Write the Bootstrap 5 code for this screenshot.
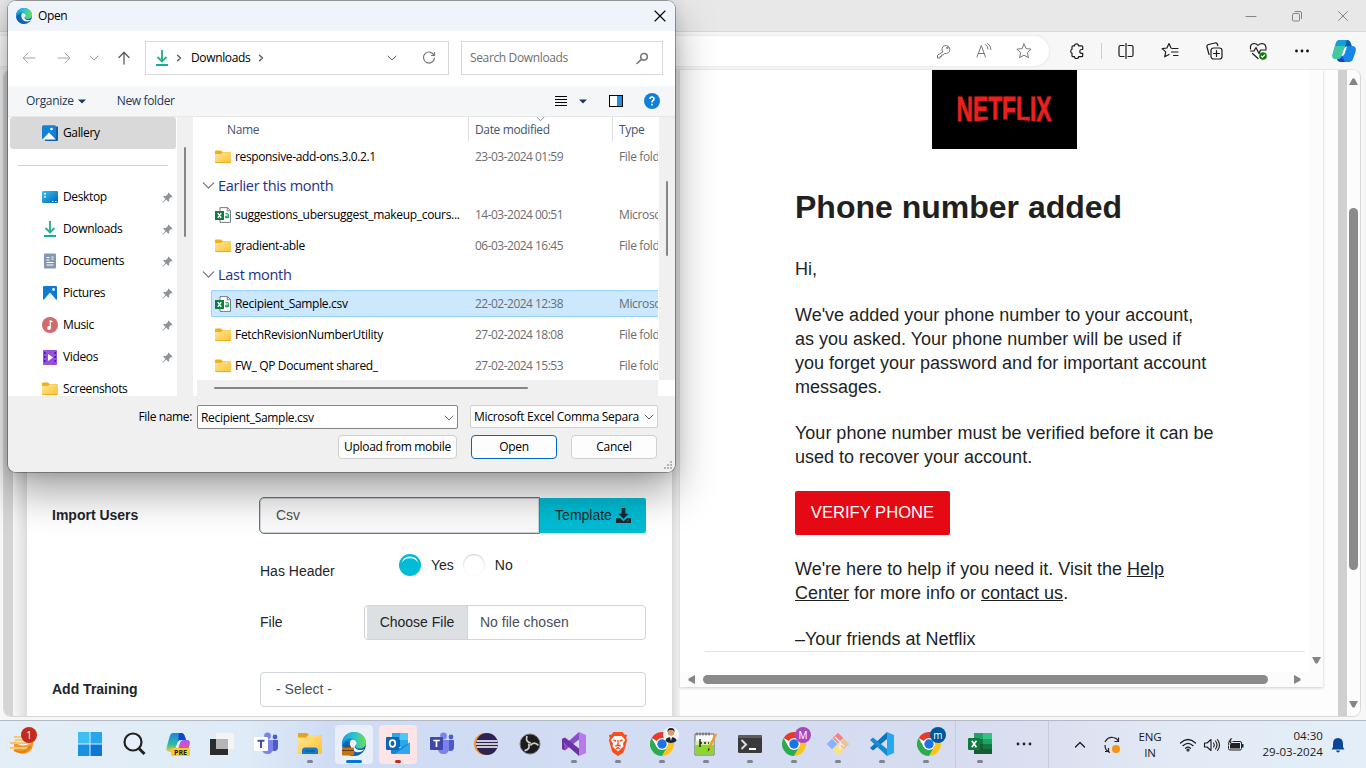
<!DOCTYPE html>
<html lang="en">
<head>
<meta charset="utf-8">
<title>Open</title>
<link href="https://cdn.jsdelivr.net/npm/bootstrap@5.3.0/dist/css/bootstrap.min.css" rel="stylesheet">
<style>
html,body{width:1366px;height:768px;overflow:hidden}
body{background:#f7f7f7;color:#212529;font:14px/20px "Liberation Sans",Arial,sans-serif;position:relative}
svg{display:block;flex:none}
.ln{fill:none;stroke:currentColor;stroke-linecap:round;stroke-linejoin:round}
/* browser */
.b-title{height:32px;background:#e8e8e8;border-bottom:1px solid #d9d9d9;color:#858585;padding-right:17px}
.b-tools{height:37px;padding-right:10px;color:#1b1b1b}
.omni{width:1049px;height:30px;border-radius:0 15px 15px 0;background:#fff;color:#777;box-shadow:0 0 3px #ddd;padding-right:17px}
.viewport{height:648px;margin:0 5px 0 3px;border:1px solid #d9d9d9;border-top-color:#e6e6e6;border-radius:8px;background:#fff;overflow:hidden}
.strip-a{width:9px;background:#d4d4d4}
.strip-b{width:14px;background:linear-gradient(90deg,#f7f7f7,#ddd)}
.formcard{width:645px;padding:0 26px 9px 25px}
.strip-c{width:8px;background:linear-gradient(90deg,#dcdcdc,#f2f2f2)}
.lab{width:208px;padding-bottom:2px}
.ctl{border:1px solid #ced4da;border-radius:4px;height:35px;color:#495057;background:#fff}
.ctl-ok{border:1px solid #2e9e55;border-radius:5px 0 0 5px;height:37px;width:281px;margin-left:-1px;background:#fafafa;box-shadow:inset 0 0 0 1px #ced4da}
.btn-tpl{background:#00bcd4;border:0;border-radius:0 2px 2px 0;height:35px;width:106px;font-size:14px;color:#212529;padding:0}
.rad{width:22px;height:22px;border-radius:50%;background:#fff;box-shadow:inset 0 1px 2px #ccc}
.rad-on{background:#00bcd4;box-shadow:none}
.pick{background:#dde0e3;width:101px;margin-left:2px;border-right:1px solid #ced4da;color:#212529}
.right{width:658px;background:#fdfdfd}
.mailframe{width:643px;height:617px;background:#fff;box-shadow:0 1px 3px #ccc}
.mail{width:600px;margin-left:25px;height:582px;border-bottom:1px solid #e5e5e5;font-size:18px;line-height:24px;color:#221f1f;padding:0 90px;overflow:hidden}
.mail p{margin:0 0 22px}
.mail h1{font-size:32px;line-height:38px;font-weight:700;margin:39px 0 31px}
.mail a{color:inherit}
.nf{width:145px;height:79px;background:#000}
.btn-red{background:#e50914;color:#fff;border-radius:2px;font-size:16.6px;width:155px;height:44px;border:0;padding:0}
.vs{width:14px;background:#fcfcfc}
.thumbc{background:#8a8a8a;border-radius:5px}
/* dialog */
.dlg{position:absolute;left:8px;top:1px;width:667px;height:471px;border-radius:8px;overflow:hidden;background:#f0f0f0;color:#000;font:12px/16px "Open Sans","Noto Sans",sans-serif;letter-spacing:-.36px;z-index:5}
.dlgshadow{position:absolute;left:8px;top:1px;width:667px;height:471px;border-radius:8px;box-shadow:0 0 0 1px rgba(0,0,0,.3),0 20px 42px rgba(0,0,0,.36),0 2px 14px rgba(0,0,0,.13);z-index:4}
.d-title{height:30px;background:#eff3fa;padding:0 9px 0 8px}
.d-nav{height:55px;background:#fff;color:#5c5c5c;padding:0 12px 1px 14px}
.abox{border:1px solid #d9d9d9;height:34px;background:#fff}
.d-cmd{height:31px;background:#f5f6f7;border-bottom:1px solid #e6e8ea;color:#1e395b;padding:0 15px 0 18px}
.d-body{height:279px}
.side{width:169px;background:#fff;overflow:hidden}
.sitem{height:32px;padding:0 4px 0 34px;gap:5px;flex:none}
.gal{background:#d9d9d9;border-radius:3px;margin:0 1px 0 2px;padding-left:32px}
.sep{height:1px;background:#d2d2d2;margin:16px 9px 15px 10px;flex:none}
.sb{width:16px;background:#f0f0f0}
.tl{background:#868686;border-radius:1px}
.list{width:461px;height:263px;background:#fff;overflow:hidden;margin-left:4px}
.lhead{height:25px;color:#44546f;flex:none}
.lhead>div{border-right:1px solid #e0e0e0;white-space:nowrap}
.lrow{height:31px;padding:2px 0 2px 14px;flex:none;white-space:nowrap;color:#6d6d6d}
.lrow>div{height:27px;border:1px solid transparent;border-right:0;padding-left:3px;width:447px;overflow:hidden}
.lrow.sel>div{background:#cce8ff;border-color:#99d1ff;border-radius:2px 0 0 2px}
.lname{width:260px;color:#000;gap:4px}
.ldate{width:144px;letter-spacing:-.52px}
.lgrp{height:27px;padding-left:5px;color:#1e3287;font-size:14.5px;flex:none;gap:3px;letter-spacing:-.3px}
.fbtn{height:24px;border:1px solid #d0d0d0;border-radius:4px;background:#fdfdfd;color:#000;font-size:12px;line-height:16px;padding:0;letter-spacing:-.3px;text-align:center}
.fbtn-p{border-color:#0067c0;outline:0}
/* taskbar */
.task{height:48px;background:linear-gradient(90deg,#e3eef7 0,#dfebf6 18%,#cfdcf4 24%,#d3dcf3 50%,#d7dcf0 70%,#dde0f0 78%,#e2eaf5 86%,#e3eef8 100%);border-top:1px solid #b3b9c4;color:#1a1a1a;font-family:"Open Sans","Noto Sans",sans-serif;font-size:11px;line-height:16px}
.tk{width:44px;height:47px;position:relative;padding-bottom:2px}
.tk-on::before{content:"";position:absolute;left:3px;top:4px;width:38px;height:39px;border-radius:4px;background:#e9effa;z-index:0}
.tk-red::before{background:#fde4e6}
.tk svg{position:relative}
.run::after,.act::after,.alr::after{content:"";position:absolute;bottom:5px;left:19px;width:6px;height:3px;border-radius:2px;background:#7d838f}
.act::after{left:14px;width:16px;background:#0078d4}
.alr::after{background:#c42b1c}
.bdg{position:absolute;width:16px;height:16px;border-radius:50%;color:#fff;font-size:10px;line-height:16px;text-align:center}
.vline{width:1px;height:47px;background:#c3cbe0}
</style>
</head>
<body class="d-flex flex-column">
<svg width="0" height="0" class="position-absolute">
<defs>
<linearGradient id="gE1" x1="0" x2="1"><stop offset="0" stop-color="#1b9de2"/><stop offset=".5" stop-color="#2bc3d2"/><stop offset="1" stop-color="#6be04c"/></linearGradient>
<linearGradient id="gE2" x1="0" x2="1" y1="0" y2="1"><stop offset="0" stop-color="#1a9fe0"/><stop offset="1" stop-color="#0b4a9a"/></linearGradient>
<linearGradient id="gF" x1="0" x2="1" y1="0" y2="1"><stop offset="0" stop-color="#ffe69a"/><stop offset="1" stop-color="#fcc22f"/></linearGradient>
<linearGradient id="gB" x1="0" x2="1" y1="0" y2="1"><stop offset="0" stop-color="#35c3f3"/><stop offset="1" stop-color="#0563b8"/></linearGradient>
<linearGradient id="gCo" x1="0" x2="0" y1="0" y2="1"><stop offset="0" stop-color="#1389e0"/><stop offset=".6" stop-color="#2fb9a8"/><stop offset="1" stop-color="#ffd02f"/></linearGradient>
<linearGradient id="gCp" x1="0" x2="0" y1="0" y2="1"><stop offset="0" stop-color="#a35bf0"/><stop offset=".6" stop-color="#f0519c"/><stop offset="1" stop-color="#ff8a48"/></linearGradient>
</defs>
<symbol id="edge" viewBox="0 0 24 24"><circle cx="12" cy="12" r="12" fill="url(#gE2)"/><path d="M0 12C0 5 5 0 12 0s12 5 12 10.500c0 4-3 6-6.500 6-2.500 0-4-1-4-2 0-.7 1.200-1 1.200-3 0-2.800-2.700-5-6.200-5C4 6.500 1 9 0 12z" fill="url(#gE1)"/><path d="M14.700 11.500c0-2.400-2-4-4.700-4C6.600 8.500 7.500 16 12 19c3 2 8 1.600 10.300-1.800-1 .6-2.600.9-4 .8-3.300 0-5.600-1.800-5.600-3.500 0-.9 2-1.200 2-3z" fill="#fff" opacity=".93"/><path d="M8 9.500c-3 3-1.500 11 6 14.300C8 24.500 1 20 .4 13.500 1.500 10.500 5 8.500 8 9.500z" fill="#0f62b8"/></symbol>
<symbol id="folder" viewBox="0 0 16 16"><path d="M0 2.500Q0 1.500 1 1.500h5l1.800 1.800H15q1 0 1 1V6H0z" fill="#f3b013"/><path d="M0 5.500q0-.6.600-.6H6L7.700 3.600H15q1 0 1 1v8q0 1.400-1 1.400H1q-1 0-1-1z" fill="url(#gF)"/><path d="M.3 13.600h15.400" stroke="#e2a116" stroke-width=".8"/></symbol>
<symbol id="dl" viewBox="0 0 16 16"><path d="M8 0v11M3.500 7L8 11.500 12.500 7" fill="none" stroke="#2bb08e" stroke-width="1.900"/><path d="M2 14h12v2H2z" fill="#17ab9b"/></symbol>
<symbol id="pic" viewBox="0 0 16 16"><rect x="1" y="1" width="14" height="14" rx="1.200" fill="#0f7ad2"/><path d="M1.500 15L8 7.500l6.500 7.500z" fill="#eaf6ff"/><circle cx="11.500" cy="4.500" r="1.400" fill="#fff"/></symbol>
<symbol id="pin" viewBox="0 0 12 12"><path d="M7 .5l4.500 4.500-1 .6-.7-.1-2 2.200.1 2.200-1 .8-2.300-2.400L1 11.700l-.7-.3 3.400-3.700L1.300 5.300l.8-1 2.200.1L6.500 2.300l-.1-.8z" fill="#8f9499"/></symbol>
<symbol id="csv" viewBox="0 0 16 16"><path d="M5 .6h7.500L15.500 3.600v11.800H5z" fill="#fff" stroke="#7b7b7b"/><path d="M12.300.6v3.200h3.200" fill="none" stroke="#7b7b7b"/><rect y="4" width="9" height="9" fill="#107c41"/><path d="M2.800 6.200l3.400 4.600M6.200 6.200L2.800 10.800" stroke="#fff" stroke-width="1.400"/><path d="M10.500 7q3-1 3 1v3M13.500 8.800q-3 0-3 1.300t3 .2" fill="none" stroke="#21a366" stroke-width="1.200"/></symbol>
<symbol id="chev" viewBox="0 0 10 10"><path d="M1 3l4 4 4-4" class="ln"/></symbol>
<symbol id="chrome" viewBox="0 0 24 24"><circle cx="12" cy="12" r="12" fill="#fff"/><path d="M12 12L1.600 6A12 12 0 0 1 22.400 6z" fill="#e33b2e"/><path d="M12 6h10.400A12 12 0 0 1 12 24l5.200-9z" fill="#fcc31e"/><path d="M1.600 6A12 12 0 0 0 12 24l5.200-9L12 12 6.800 15z" fill="#2da94f"/><circle cx="12" cy="12" r="6" fill="#fff"/><circle cx="12" cy="12" r="4.700" fill="#1a73e8"/></symbol>
<symbol id="teams" viewBox="0 0 24 24"><circle cx="21" cy="5" r="2.400" fill="#5059c9"/><circle cx="13.500" cy="4" r="3.400" fill="#7b83eb"/><path d="M18 8h6v7q0 4-3.500 4-2 0-3-1z" fill="#5059c9"/><path d="M8 8h11v8q0 6-5.500 6T8 16z" fill="#7b83eb"/></symbol>
</svg>

<header class="b-title d-flex align-items-center justify-content-end flex-shrink-0">
 <svg width="12" height="12" viewBox="0 0 12 12" class="ln"><path d="M1 6.500h10"/></svg>
 <svg width="12" height="12" viewBox="0 0 12 12" class="ln" style="margin:0 34px"><rect x="1.500" y="3.500" width="7" height="7.500" rx="1"/><path d="M4 1.500h5q1.500 0 1.500 1.500v5.500"/></svg>
 <svg width="12" height="12" viewBox="0 0 12 12" class="ln"><path d="M1.500 1.500l9 9M10.500 1.500l-9 9"/></svg>
</header>
<div class="b-tools d-flex align-items-center flex-shrink-0">
 <div class="omni d-flex align-items-center justify-content-end me-auto" style="gap:24px">
  <svg width="16" height="16" viewBox="0 0 16 16" class="ln"><path d="M6.500 8.700a4 4 0 1 1 2.300 1.700L7 12H5.500v1.500H4V15H1.500v-2.500z" /><circle cx="11.300" cy="4.800" r=".8"/></svg>
  <svg width="16" height="16" viewBox="0 0 16 16" class="ln"><path d="M1 14L5.300 2.500 9.500 14M2.600 10.500h5.500M9.500 1.500q2.500 1.500 2.500 4.500M11.500.5q3.500 2 3.500 6"/></svg>
  <svg width="16" height="16" viewBox="0 0 16 16" class="ln"><path d="M8 1l2.100 4.600 5 .6-3.700 3.400 1 5L8 12.200l-4.400 2.400 1-5L.9 6.200l5-.6z"/></svg>
 </div>
 <div class="d-flex align-items-center">
  <svg width="16" height="16" viewBox="0 0 16 16" class="ln" stroke-width="1.200"><path d="M5.500 2.800a2 2 0 0 1 4 0h3.200q1 0 1 1v2.700h-1a1.900 1.900 0 0 0 0 3.800h1v2.400q0 1-1 1H9.500a2 2 0 0 1-4 0H4q-1 0-1-1v-2.400a2.200 2.200 0 0 1 0-4V3.800q0-1 1-1z"/></svg>
  <div style="width:1px;height:16px;background:#ccc;margin:0 16px 0 16px"></div>
  <svg width="16" height="16" viewBox="0 0 16 16" class="ln" stroke-width="1.200"><path d="M6 2.500H2.500q-1.500 0-1.500 1.500v8q0 1.500 1.500 1.500H6M10 2.500h3.500q1.500 0 1.500 1.500v8q0 1.500-1.500 1.500H10M8 .5v15"/></svg>
  <svg width="18" height="18" viewBox="0 0 18 18" class="ln" stroke-width="1.200" style="margin-left:27px"><path d="M10 6L8 1.500 5.900 6l-4.700.6 3.500 3.300-1 4.900L8 12.500M11 6.500h6M10.500 10H17M12.500 13.500H17"/></svg>
  <svg width="18" height="18" viewBox="0 0 18 18" class="ln" stroke-width="1.200" style="margin-left:26px"><rect x="6" y="6" width="11" height="11" rx="2.500"/><path d="M11.500 8.500v6M8.500 11.500h6M4 12.500L2 5Q1.500 3 3.500 2.500L10 1q2-.5 2.500 1.500l.3 1.200"/></svg>
  <svg width="19" height="18" viewBox="0 0 19 18" class="ln" stroke-width="1.200" style="margin-left:26px"><path d="M1.500 7Q.7 2 5 1.500q2.500 0 4 2 1.500-2 4-2Q17.500 2 17 7M1.500 9H5l2-3.500 3 6L11.500 8H17M3.500 11.500L9 16.500"/><circle cx="14" cy="14" r="3.800" fill="#107c10" stroke="none"/><path d="M12.500 14.200l1.100 1 2-2.200" stroke="#fff"/></svg>
  <svg width="16" height="16" viewBox="0 0 16 16" fill="#111" style="margin-left:26px"><circle cx="2.500" cy="8" r="1.400"/><circle cx="8" cy="8" r="1.400"/><circle cx="13.500" cy="8" r="1.400"/></svg>
  <svg width="24" height="24" viewBox="0 0 24 24" style="margin-left:22px"><path d="M7 1h8q3 0 4 4l1 3h-5q-2 0-3 3l-2 6q-1 3-4 3H4Q-1 20 1 14L3.500 5Q4.500 1 7 1z" fill="#12a0d8"/><path d="M3 7L1 14q-2 6 3 6h2q3 0 4-3l3-8q1-2 3-2z" fill="#43c9a0"/><path d="M15 1q3 0 4 4l1 3h-5l-2 1q1-7 2-8z" fill="#0b5fa8"/><path d="M17 23H9q-3 0-4-3h2q2 0 3-3l2.500-7q1-3 4-3H20q5 0 3.500 6L21 20q-1 3-4 3z" fill="#1686e8"/><path d="M9 23q-3 0-4-3h1q3 0 4-3l3 6z" fill="#1c3fcb"/><path d="M9.500 17l2.800-7.500q.8-2 2.700-2l-2.500 7.500q-.8 2-3 2z" fill="#fff"/></svg>
 </div>
</div>

<main class="viewport d-flex flex-shrink-0">
 <div class="strip-a"></div><div class="strip-b"></div>
 <section class="formcard d-flex flex-column justify-content-end">
  <div class="d-flex align-items-center" style="height:37px;margin-bottom:17px">
   <div class="lab fw-bold">Import Users</div>
   <div class="ctl-ok d-flex align-items-center" style="padding:0 0 2px 16px;color:#495057">Csv</div>
   <button class="btn btn-tpl d-flex align-items-center justify-content-center gap-1">Template
    <svg width="15" height="15" viewBox="0 0 16 16" fill="#212529"><path d="M6 0h4v6h3.500L8 11.500 2.500 6H6z"/><path d="M0 11h4.500L8 14l3.500-3H16v5H0zM12 13.200v1h1.200v-1z" fill-rule="evenodd"/></svg></button>
  </div>
  <div class="d-flex" style="height:40px;margin-bottom:14px">
   <div style="margin-left:208px;width:139px;padding-top:10px">Has Header</div>
   <div class="rad rad-on" style="margin-top:3px"><svg width="22" height="22" viewBox="0 0 22 22"><path d="M2.500 9.500Q4 2.500 11 2.500t8.500 7Q17 4.300 11 4.300T2.500 9.500z" fill="#fff"/></svg></div><div style="padding:4px 10px 0 10px">Yes</div>
   <div class="rad" style="margin:3px 0 0 -1px"></div><div style="padding:4px 0 0 10px">No</div>
  </div>
  <div class="d-flex align-items-center" style="margin-bottom:32px">
   <div style="margin-left:208px;width:104px;padding-bottom:1px">File</div>
   <div class="ctl d-flex flex-grow-1"><div class="pick d-flex align-items-center justify-content-center" style="padding-bottom:2px">Choose File</div><div class="ps-2 ms-1 align-self-center" style="padding-bottom:2px">No file chosen</div></div>
  </div>
  <div class="d-flex align-items-center">
   <div class="lab fw-bold">Add Training</div>
   <div class="ctl flex-grow-1 d-flex align-items-center" style="color:#495057;padding:0 15px 1px">- Select -</div>
  </div>
 </section>
 <div class="strip-c"></div>
 <section class="right">
  <div class="mailframe d-flex flex-column">
   <div class="d-flex" style="height:602px">
    <article class="mail">
     <div class="nf" style="margin-left:137px"><svg width="145" height="79" viewBox="0 0 145 79"><text x="24.500" y="50.500" textLength="95" lengthAdjust="spacingAndGlyphs" font-family="Liberation Sans Narrow,Liberation Sans,sans-serif" font-weight="700" font-size="35" fill="#e8201f" stroke="#e8201f" stroke-width=".8">NETFLIX</text><ellipse cx="72.500" cy="59" rx="50" ry="9.500" fill="#000"/></svg></div>
     <h1>Phone number added</h1>
     <p>Hi,</p>
     <p>We've added your phone number to your account,<br>as you asked. Your phone number will be used if<br>you forget your password and for important account<br>messages.</p>
     <p>Your phone number must be verified before it can be<br>used to recover your account.</p>
     <button class="btn btn-red d-block" style="margin-bottom:22px">VERIFY PHONE</button>
     <p>We're here to help if you need it. Visit the <a href="#">Help</a><br><a href="#">Center</a> for more info or <a href="#">contact us</a>.</p>
     <p>–Your friends at Netflix</p>
    </article>
    <div class="vs ms-auto d-flex align-items-end justify-content-center"><svg width="9" height="7" viewBox="0 0 9 7" style="margin-bottom:8px"><path d="M0 0h9L5.500 6.500h-2z" fill="#858585"/></svg></div>
   </div>
   <div class="d-flex align-items-center" style="height:15px;background:#fcfcfc;padding-left:8px">
    <svg width="7" height="9" viewBox="0 0 7 9"><path d="M7 0v9L.5 5.500v-2z" fill="#858585"/></svg>
    <div class="thumbc" style="width:565px;height:9px;margin:0 26px 0 8px"></div>
    <svg width="7" height="9" viewBox="0 0 7 9"><path d="M0 0v9l6.500-3.500v-2z" fill="#858585"/></svg>
   </div>
  </div>
 </section>
 <div style="width:9px;background:#d0d0d0"></div>
 <div class="d-flex flex-column align-items-center flex-grow-1" style="background:#fcfcfc;padding:8px 0 8px">
  <svg width="9" height="7" viewBox="0 0 9 7"><path d="M0 7h9L5.500.5h-2z" fill="#858585"/></svg>
  <div class="thumbc" style="width:9px;height:362px;margin:123px 0 auto"></div>
  <svg width="9" height="7" viewBox="0 0 9 7"><path d="M0 0h9L5.500 6.500h-2z" fill="#858585"/></svg>
 </div>
</main>
<div style="height:3px" class="flex-shrink-0"></div>

<footer class="task d-flex align-items-center flex-shrink-0">
 <div class="tk" style="width:68px"><svg width="26" height="24" viewBox="0 0 26 24" style="margin:13px 0 0 10px"><path d="M4 7a11 9 0 0 0 19 0q1 9-6 12-8 3-13-5z" fill="#f49a1f"/><path d="M4 3h9M0 9h21M5 6h8M0 14h17" stroke="#f3c777" stroke-width="1.800"/><path d="M4 16q9 6 17-4" fill="none" stroke="#e77d14" stroke-width="2"/></svg><span class="bdg" style="left:21px;top:6px;background:#c42b1c">1</span></div>
 <div class="tk d-grid align-items-center justify-content-center"><svg width="24" height="24" viewBox="0 0 24 24"><path d="M0 0h11.500v11.500H0z" fill="#3cc0f4"/><path d="M12.500 0H24v11.500H12.500z" fill="#26a7ec"/><path d="M0 12.500h11.500V24H0z" fill="#1791e0"/><path d="M12.500 12.500H24V24H12.500z" fill="#0a78d4"/></svg></div>
 <div class="tk d-grid align-items-center justify-content-center"><svg width="24" height="24" viewBox="0 0 24 24"><circle cx="11" cy="10" r="8.500" fill="#e8f1f9" stroke="#222" stroke-width="2.200"/><path d="M17 16.500l5.500 5.500" stroke="#222" stroke-width="3"/></svg></div>
 <div class="tk d-grid align-items-center justify-content-center"><svg width="26" height="24" viewBox="0 0 26 24"><path d="M8 1h8q3 0 4 4l1 3h-5q-2 0-3 3l-2 6q-1 3-4 3H5q-5 0-3-6L4.500 5Q5.500 1 8 1z" fill="url(#gCo)"/><path d="M14 1h2q3 0 4 4l1 3h-5l-3 2z" fill="#1545cc"/><path d="M10 20q2 0 3-3l2-6q1-3 4-3h3q4 0 2.500 5L23 19q-1 4-4 4h-7z" fill="url(#gCp)"/><path d="M10.500 16l2.300-6q.8-2 2.700-2l-2 6q-.8 2-3 2z" fill="#eaf2fa"/><rect x="6" y="16" width="19" height="8" rx="1.500" fill="#fccb1b"/><text x="15.500" y="22.700" font-size="7" font-weight="700" text-anchor="middle" fill="#222">PRE</text></svg></div>
 <div class="tk d-grid align-items-center justify-content-center"><svg width="24" height="24" viewBox="0 0 24 24"><path d="M6 1h18v16H6z" fill="#f4f4f4"/><path d="M0 7h18v16H0z" fill="#2b2b2b"/><path d="M6 7h12v10H6z" fill="#b5b5b5"/></svg></div>
 <div class="tk d-grid align-items-center justify-content-center"><svg width="24" height="24"><use href="#teams"/><rect y="5" width="14" height="14" rx="1" fill="#fff"/><path d="M3.500 8.800h7M7 8.800V16" stroke="#464eb8" stroke-width="2"/></svg></div>
 <div class="tk run d-grid align-items-center justify-content-center"><svg width="24" height="24" viewBox="0 0 24 24"><path d="M0 2q0-1 1-1h8l2 2h12q1 0 1 1v4H0z" fill="#e8a317"/><path d="M0 5.500h8L10.500 3H23q1 0 1 1v17q0 1-1 1H1q-1 0-1-1z" fill="url(#gF)"/><path d="M4 22v-3q0-3.500 3-3.500h10q3 0 3 3.500v3z" fill="#1479c9"/><path d="M7 19h10" stroke="#0b5596"/></svg></div>
 <div class="tk tk-on act d-grid align-items-center justify-content-center"><svg width="24" height="24"><use href="#edge"/><rect y="15.500" width="12" height="8" rx="1" fill="#c27410"/><path d="M0 18.500h12M4 15.500V14h4v1.500" stroke="#663a08" fill="none"/></svg></div>
 <div class="tk tk-on tk-red alr d-grid align-items-center justify-content-center"><svg width="24" height="24" viewBox="0 0 24 24"><path d="M6 1h16v14H6z" fill="#0f5ea8"/><path d="M6 1h8v7H6zM14 8h8v7h-8z" fill="#28a8ea"/><path d="M14 1h8v7h-8z" fill="#50c8f4"/><path d="M5 11l9 5 10-5.500V21q0 1-1 1H6q-1 0-1-1z" fill="#1684d8"/><path d="M9 22l15-11v10q0 1-1 1z" fill="#2fa9ec"/><rect y="5" width="13" height="13" rx="1" fill="#0b66b8"/><ellipse cx="6.500" cy="11.500" rx="2.800" ry="3.300" fill="none" stroke="#fff" stroke-width="1.700"/></svg></div>
 <div class="tk d-grid align-items-center justify-content-center"><svg width="24" height="24"><use href="#teams"/><rect y="5" width="13" height="13" rx="1" fill="#4047ad"/><path d="M3.300 8.500h6.500M6.500 8.500V15" stroke="#fff" stroke-width="1.700"/></svg></div>
 <div class="tk d-grid align-items-center justify-content-center"><svg width="24" height="24" viewBox="0 0 24 24"><circle cx="11" cy="12" r="11" fill="#f7941e"/><circle cx="13" cy="12" r="11" fill="#2c2255"/><path d="M2.500 9h21M2 12h22M2.500 15h21" stroke="#fff" stroke-width="1.500"/></svg></div>
 <div class="tk d-grid align-items-center justify-content-center"><svg width="22" height="22" viewBox="0 0 22 22"><circle cx="11" cy="11" r="10" fill="#1c1c1f" stroke="#777"/><g fill="none" stroke="#cfcfcf" stroke-width="1.700"><path id="obs" d="M8 3q-2 6 4 7"/><use href="#obs" transform="rotate(120 11 11)"/><use href="#obs" transform="rotate(240 11 11)"/></g></svg></div>
 <div class="tk run d-grid align-items-center justify-content-center"><svg width="24" height="24" viewBox="0 0 24 24"><path d="M17 0l7 3v18l-7 3z" fill="#b57be8"/><path d="M17 0v7.500L3 18.500 0 17v-2z" fill="#8a4fc7"/><path d="M17 24v-7.500L3 5.500 0 7v2z" fill="#6c33a5"/><path d="M0 7l2.500-1v12L0 17z" fill="#6c33a5"/></svg></div>
 <div class="tk run d-grid align-items-center justify-content-center"><svg width="20" height="24" viewBox="0 0 22 24" preserveAspectRatio="none"><path d="M6 0h10l2 2.500 3 .5-1 3 1 2-3 10q-.5 2-2 3l-5 3-5-3q-1.500-1-2-3L1 8l1-2-1-3 3-.5z" fill="#fa4d1c"/><path d="M7 4h8l4 4-2.500 3.500.5 3-6 5-6-5 .5-3L3 8z" fill="#fff"/><path d="M6 8l3 1M16 8l-3 1M11 8v5M8 14l3-1 3 1M9 17l2-1.500 2 1.500" fill="none" stroke="#fa4d1c" stroke-width="1.500"/></svg></div>
 <div class="tk run d-grid align-items-center justify-content-center"><svg width="24" height="24"><use href="#chrome"/></svg><span class="bdg" style="left:23px;top:6px;background:#f6f3ef;overflow:hidden"><svg width="16" height="16" viewBox="0 0 16 16"><path d="M2 16q0-6 6-6t6 6z" fill="#1b2230"/><circle cx="8" cy="5.500" r="3.200" fill="#d79b74"/><path d="M4.500 5Q4 1 8 1t3.500 4L10 3H6z" fill="#222"/><path d="M7 10h2l-1 4z" fill="#fff"/></svg></span></div>
 <div class="tk run d-grid align-items-center justify-content-center"><svg width="24" height="24" viewBox="0 0 24 24"><path d="M1 2h19v21H1z" fill="#fafafa" stroke="#666"/><path d="M1.500 12h18v10.500h-18z" fill="#8ad82a"/><path d="M1.500 9h18v4h-18z" fill="#d0f09a"/><path d="M3 .5v3M6 .5v3M9 .5v3M12 .5v3M15 .5v3" stroke="#555"/><path d="M6 7v8M6 11h2M10 11h2M14 11h1" stroke="#222" stroke-width="1.500"/><path d="M22 2l-8 16" stroke="#e8a02c" stroke-width="2.500"/><path d="M14.500 16l-1 4 2.500-3z" fill="#333"/></svg></div>
 <div class="tk run d-grid align-items-center justify-content-center"><svg width="24" height="24" viewBox="0 0 24 24"><rect y="3" width="24" height="18" rx="1.500" fill="#3a3a3c"/><path d="M0 4.500Q0 3 1.500 3h21Q24 3 24 4.500V6H0z" fill="#5c5c5e"/><path d="M3.500 8l4.500 4.500L3.500 17" fill="none" stroke="#ddd" stroke-width="2"/><path d="M11 17h7" stroke="#fff" stroke-width="2"/></svg></div>
 <div class="tk run d-grid align-items-center justify-content-center"><svg width="24" height="24"><use href="#chrome"/></svg><span class="bdg" style="left:23px;top:6px;background:#ab47bc">M</span></div>
 <div class="tk run d-grid align-items-center justify-content-center"><svg width="24" height="24" viewBox="0 0 24 24"><g transform="rotate(45 12 12)"><path d="M4 4h7.500v7.500H4z" fill="#f4827c"/><path d="M12.500 4H20v7.500h-7.500z" fill="#efc195"/><path d="M4 12.500h7.500V20H4z" fill="#86b3fb"/><path d="M12.500 12.500H20V20h-7.500z" fill="#fbe27a"/></g><path d="M9 5l5 5v8M14 11l4 3" fill="none" stroke="#f5f2f8" stroke-width="1.300"/></svg></div>
 <div class="tk run d-grid align-items-center justify-content-center"><svg width="24" height="24" viewBox="0 0 24 24"><path d="M17 0l7 3v18l-7 3z" fill="#25a8f0"/><path d="M17 0v7L3 18.500 0 16z" fill="#0d74bd"/><path d="M17 24v-7L3 5.500 0 8z" fill="#148bd6"/></svg></div>
 <div class="tk run d-grid align-items-center justify-content-center" style="width:51px;padding-right:2px"><svg width="24" height="24"><use href="#chrome"/></svg><span class="bdg" style="left:26px;top:6px;background:#01579b">m</span></div>
 <div class="vline" style="margin-right:2px"></div>
 <div class="tk run d-grid align-items-center justify-content-center"><svg width="24" height="24" viewBox="0 0 24 24"><path d="M6 1h9v6H6z" fill="#21a366"/><path d="M15 1h9v6h-9z" fill="#33c481"/><path d="M6 7h9v5.500H6z" fill="#107c41"/><path d="M15 7h9v5.500h-9z" fill="#21a366"/><path d="M6 12h18v10H6z" fill="#185c37"/><path d="M15 12h9v5h-9z" fill="#107c41"/><rect y="6" width="12" height="12" rx="1" fill="#0f7a40"/><path d="M3.800 8.800l4.600 6.500M8.400 8.800l-4.600 6.500" stroke="#fff" stroke-width="1.700"/></svg></div>
 <div class="tk d-grid align-items-center justify-content-center"><svg width="16" height="6" viewBox="0 0 16 6" fill="#222"><circle cx="2" cy="3" r="1.400"/><circle cx="8" cy="3" r="1.400"/><circle cx="14" cy="3" r="1.400"/></svg></div>
 <div class="vline" style="margin-left:2px"></div>
 <svg width="12" height="10" viewBox="0 0 12 10" class="ln" stroke-width="1.300" style="margin-left:25px"><path d="M1.500 7L6 2.500 10.500 7"/></svg>
 <svg width="20" height="20" viewBox="0 0 20 20" style="margin-left:16px"><path d="M3 7q3-5.500 8-4.500 4 .5 5.500 4M16.500 2.500v4h-4M3 10q0 6 5 7.500M3 16.500h3.500V13" fill="none" stroke="#222" stroke-width="1.200"/><circle cx="14" cy="14" r="4" fill="#f7930e"/></svg>
 <div class="text-center" style="width:36px;margin-left:10px;font-size:11.5px;letter-spacing:-.1px">ENG<br>IN</div>
 <svg width="18" height="16" viewBox="0 0 18 16" class="ln" stroke-width="1.200" style="margin-left:11px"><path d="M1.500 6q7.500-7 15 0M4 8.700q5-4.700 10 0M6.500 11.300q2.500-2.500 5 0"/><circle cx="9" cy="13" r="1"/></svg>
 <svg width="18" height="16" viewBox="0 0 18 16" class="ln" stroke-width="1.100" style="margin-left:6px"><path d="M1.500 6h2.500l4-3.500v11L4 10H1.500zM10.500 6q1.500 2 0 4M12.500 4q3 4 0 8M14.500 2.500q4 5.500 0 11"/></svg>
 <svg width="17" height="14" viewBox="0 0 17 14" style="margin-left:6px"><rect x="1.500" y="3.500" width="13" height="8.500" rx="1.500" fill="none" stroke="#222"/><rect x="3" y="5" width="10" height="5.500" fill="#222"/><path d="M15 6h1.500v3.500H15z" fill="#222"/><path d="M3.500 0L.5 4.800h2.300L1.500 8 5.500 3.500H3.800L5.500 0z" fill="#222" stroke="#e2edf7" stroke-width=".6"/></svg>
 <div class="text-end" style="width:69px;margin:-1px 0 0 10px;font-size:11.5px;letter-spacing:.05px;white-space:nowrap">04:30<br>29-03-2024</div>
 <svg width="14" height="16" viewBox="0 0 14 16" fill="#0a4696" style="margin-left:8px"><path d="M2 7q0-6 5-6t5 6v3l1.500 2.500H.5L2 10z"/><path d="M5 13.500h4q-.5 2-2 2t-2-2z"/></svg>
</footer>

<div class="dlgshadow"></div>
<div class="dlg d-flex flex-column">
 <div class="d-title d-flex align-items-center flex-shrink-0"><svg width="16" height="16"><use href="#edge"/></svg><span style="margin-left:6px">Open</span>
  <svg width="12" height="12" viewBox="0 0 12 12" class="ln ms-auto" stroke-width="1.100"><path d="M1 1l10 10M11 1L1 11"/></svg></div>
 <div class="d-nav d-flex align-items-center flex-shrink-0">
  <svg width="14" height="14" viewBox="0 0 14 14" class="ln" style="color:#a5a5a5"><path d="M13 7H1.500M6 2L1.200 7 6 12"/></svg>
  <svg width="14" height="14" viewBox="0 0 14 14" class="ln" style="color:#a5a5a5;margin-left:21px"><path d="M1 7h11.500M8 2l4.800 5L8 12"/></svg>
  <svg width="10" height="10" style="color:#999;margin-left:18px"><use href="#chev"/></svg>
  <svg width="14" height="14" viewBox="0 0 14 14" class="ln" stroke-width="1.300" style="margin-left:18px"><path d="M7 13V1.500M2 6.500L7 1.200l5 5.300"/></svg>
  <div class="abox d-flex align-items-center" style="width:304px;margin-left:14px;padding:0 12px 0 8px">
   <svg width="16" height="16"><use href="#dl"/></svg>
   <svg width="8" height="8" viewBox="0 0 8 8" class="ln" stroke-width="1.400" style="margin:0 8px 0 5px"><path d="M2.500 1.200L5.500 4l-3 2.800"/></svg><span class="text-black">Downloads</span>
   <svg width="8" height="8" viewBox="0 0 8 8" class="ln me-auto" stroke-width="1.400" style="margin-left:7px"><path d="M2.500 1.200L5.500 4l-3 2.800"/></svg>
   <svg width="10" height="10" style="margin-right:25px"><use href="#chev"/></svg>
   <svg width="14" height="14" viewBox="0 0 14 14" class="ln" style="color:#777;stroke-width:1.200"><path d="M12 4.200A5.500 5.500 0 1 0 12.500 7M12.500 1.500v3h-3"/></svg>
  </div>
  <div class="abox d-flex align-items-center justify-content-between" style="width:202px;margin-left:12px;padding:0 13px 0 8px"><span style="color:#707070">Search Downloads</span>
   <svg width="13" height="13" viewBox="0 0 13 13" class="ln" style="stroke-width:1.600;color:#777"><circle cx="8" cy="4.800" r="3.300"/><path d="M5.500 7.300L1 11.500"/></svg></div>
 </div>
 <div class="d-cmd d-flex align-items-center flex-shrink-0"><span style="letter-spacing:-.3px">Organize</span><svg width="8" height="5" viewBox="0 0 8 5" class="ms-1"><path d="M0 .5h8L4 4.500z" fill="#1e395b"/></svg><span style="margin-left:31px">New folder</span>
  <svg width="12" height="12" viewBox="0 0 12 12" class="ms-auto" shape-rendering="crispEdges"><path d="M0 1.500h12M0 4.500h12M0 7.500h12M0 10.500h12" stroke="#000"/></svg>
  <svg width="8" height="5" viewBox="0 0 8 5" style="margin-left:12px"><path d="M0 .5h8L4 4.500z" fill="#1e395b"/></svg>
  <svg width="14" height="12" viewBox="0 0 14 12" style="margin:0 21px 0 22px"><rect x=".5" y=".5" width="13" height="11" fill="#fff" stroke="#000"/><path d="M8 1h5v10H8z" fill="#1b93e0"/></svg>
  <svg width="16" height="16" viewBox="0 0 16 16"><circle cx="8" cy="8" r="8" fill="#0f80d7"/><path d="M6 6q0-2 2-2t2 2q0 1-1.200 1.700Q8 8.300 8 9.500" fill="none" stroke="#fff" stroke-width="1.600"/><path d="M7.200 10.800h1.600v1.600H7.200z" fill="#fff"/></svg>
 </div>
 <div class="d-body d-flex flex-shrink-0">
  <nav class="side d-flex flex-column">
   <div class="sitem gal d-flex align-items-center"><svg width="16" height="16" viewBox="0 0 16 16"><path d="M2 1.500h14V15q0 1-1 1H3z" fill="#155fa5"/><rect width="14" height="14" rx="1.500" fill="#1281d6" y=".3"/><path d="M.5 14.500L7 7.500l6.800 7z" fill="#fff"/><circle cx="9.500" cy="4" r="1.300" fill="#fff"/></svg>Gallery</div>
   <div class="sep"></div>
   <div class="sitem d-flex align-items-center"><svg width="16" height="16" viewBox="0 0 16 16"><rect y="2" width="16" height="12" rx="1.200" fill="url(#gB)"/><path d="M2 4h2v1.500H2zM2 7h2v1.500H2zM10 12h1.500v1H10zM13 12h1.500v1H13z" fill="#dff6ff"/></svg>Desktop<svg width="11" height="11" class="ms-auto"><use href="#pin"/></svg></div>
   <div class="sitem d-flex align-items-center"><svg width="16" height="16"><use href="#dl"/></svg>Downloads<svg width="11" height="11" class="ms-auto"><use href="#pin"/></svg></div>
   <div class="sitem d-flex align-items-center"><svg width="16" height="16" viewBox="0 0 16 16"><rect x="2" y=".5" width="12" height="15" rx="1" fill="#8298b2"/><path d="M4.500 4.500h3M9.500 4h2M9.500 6h2M4.500 7h3M4.500 9.500h7M4.500 12h7" stroke="#fff"/></svg>Documents<svg width="11" height="11" class="ms-auto"><use href="#pin"/></svg></div>
   <div class="sitem d-flex align-items-center"><svg width="16" height="16"><use href="#pic"/></svg>Pictures<svg width="11" height="11" class="ms-auto"><use href="#pin"/></svg></div>
   <div class="sitem d-flex align-items-center"><svg width="16" height="16" viewBox="0 0 16 16"><circle cx="8" cy="8" r="8" fill="#d2696b"/><circle cx="7" cy="11" r="1.900" fill="#fff"/><path d="M8.300 11V3.800L10.500 5" fill="none" stroke="#fff" stroke-width="1.300"/></svg>Music<svg width="11" height="11" class="ms-auto"><use href="#pin"/></svg></div>
   <div class="sitem d-flex align-items-center"><svg width="16" height="16" viewBox="0 0 16 16"><rect x="1" y="1" width="14" height="15" rx="1" fill="#9353e0"/><path d="M2.800 3v12M13.200 3v12" stroke="#4c2096" stroke-width="1.600" stroke-dasharray="2 2"/><path d="M6 5l5 3.500L6 12z" fill="#fff"/></svg>Videos<svg width="11" height="11" class="ms-auto"><use href="#pin"/></svg></div>
   <div class="sitem d-flex align-items-center"><svg width="16" height="16"><use href="#folder"/></svg>Screenshots</div>
  </nav>
  <div class="sb"><div class="tl" style="width:2px;height:90px;margin:30px 0 0 7px"></div></div>
  <div class="d-flex flex-column">
   <div class="d-flex bg-white" style="height:263px">
   <div class="list d-flex flex-column">
    <div class="lhead d-flex align-items-center position-relative"><div class="h-100 d-flex align-items-center" style="width:272px;padding-left:30px">Name</div><div class="h-100 d-flex align-items-center" style="width:144px;padding-left:6px">Date modified</div><span style="padding-left:6px">Type</span>
     <svg width="9" height="6" viewBox="0 0 10 7" class="ln position-absolute" style="left:339px;top:-1px;color:#777"><path d="M1 1.500l4 4 4-4"/></svg></div>
    <div class="lrow" style="margin-top:-1px"><div class="d-flex align-items-center"><span class="lname d-flex align-items-center flex-shrink-0"><svg width="16" height="16"><use href="#folder"/></svg>responsive-add-ons.3.0.2.1</span><span class="ldate flex-shrink-0">23-03-2024 01:59</span>File folder</div></div>
    <div class="lgrp d-flex align-items-center"><svg width="13" height="13" style="color:#777"><use href="#chev"/></svg>Earlier this month</div>
    <div class="lrow"><div class="d-flex align-items-center"><span class="lname d-flex align-items-center flex-shrink-0" style="letter-spacing:-.32px"><svg width="16" height="16"><use href="#csv"/></svg>suggestions_ubersuggest_makeup_cours...</span><span class="ldate flex-shrink-0">14-03-2024 00:51</span>Microsoft</div></div>
    <div class="lrow"><div class="d-flex align-items-center"><span class="lname d-flex align-items-center flex-shrink-0"><svg width="16" height="16"><use href="#folder"/></svg>gradient-able</span><span class="ldate flex-shrink-0">06-03-2024 16:45</span>File folder</div></div>
    <div class="lgrp d-flex align-items-center"><svg width="13" height="13" style="color:#777"><use href="#chev"/></svg>Last month</div>
    <div class="lrow sel"><div class="d-flex align-items-center"><span class="lname d-flex align-items-center flex-shrink-0" style="letter-spacing:-.32px"><svg width="16" height="16"><use href="#csv"/></svg>Recipient_Sample.csv</span><span class="ldate flex-shrink-0">22-02-2024 12:38</span>Microsoft</div></div>
    <div class="lrow"><div class="d-flex align-items-center"><span class="lname d-flex align-items-center flex-shrink-0" style="letter-spacing:-.3px"><svg width="16" height="16"><use href="#folder"/></svg>FetchRevisionNumberUtility</span><span class="ldate flex-shrink-0">27-02-2024 18:08</span>File folder</div></div>
    <div class="lrow"><div class="d-flex align-items-center"><span class="lname d-flex align-items-center flex-shrink-0"><svg width="16" height="16"><use href="#folder"/></svg>FW_ QP Document shared_</span><span class="ldate flex-shrink-0">27-02-2024 15:53</span>File folder</div></div>
   </div>
   <div style="width:1px"></div>
   <div class="sb"><div class="tl" style="width:2px;height:75px;margin:64px 0 0 7px"></div></div>
   </div>
   <div class="d-flex bg-white" style="height:16px"><div style="margin-left:4px;width:461px;background:#f0f0f0"><div class="tl" style="width:314px;height:2px;margin:7px 0 0 17px"></div></div></div>
  </div>
 </div>
 <div class="d-flex flex-column flex-grow-1 position-relative">
  <div class="d-flex align-items-start" style="margin-top:9px;height:25px"><div class="text-end" style="width:189px;padding:4px 5px 0 0">File name:</div>
   <div class="d-flex align-items-center justify-content-between bg-white" style="width:261px;height:24px;border:1px solid #868686;border-radius:2px;padding:2px 3px 0 3px;letter-spacing:-.32px">Recipient_Sample.csv<svg width="10" height="10" style="color:#666"><use href="#chev"/></svg></div>
   <div class="fbtn d-flex align-items-center justify-content-between" style="width:188px;height:23px;border-radius:2px;margin-left:12px;padding:0 3px"><span class="text-nowrap">Microsoft Excel Comma Separa</span><svg width="10" height="10" style="color:#555"><use href="#chev"/></svg></div></div>
  <div class="d-flex" style="margin-top:5px;padding-left:330px"><button class="fbtn" style="width:119px">Upload from mobile</button><button class="fbtn fbtn-p" style="width:86px;margin-left:14px">Open</button><button class="fbtn" style="width:86px;margin-left:14px">Cancel</button></div>
  <svg width="9" height="9" viewBox="0 0 9 9" class="position-absolute" style="right:2px;bottom:2px"><path d="M6 0h2v2H6zM3 3h2v2H3zM6 3h2v2H6zM0 6h2v2H0zM3 6h2v2H3zM6 6h2v2H6z" fill="#b5b5b5"/></svg>
 </div>
</div>
<script src="https://cdn.jsdelivr.net/npm/bootstrap@5.3.0/dist/js/bootstrap.bundle.min.js"></script>
</body>
</html>
